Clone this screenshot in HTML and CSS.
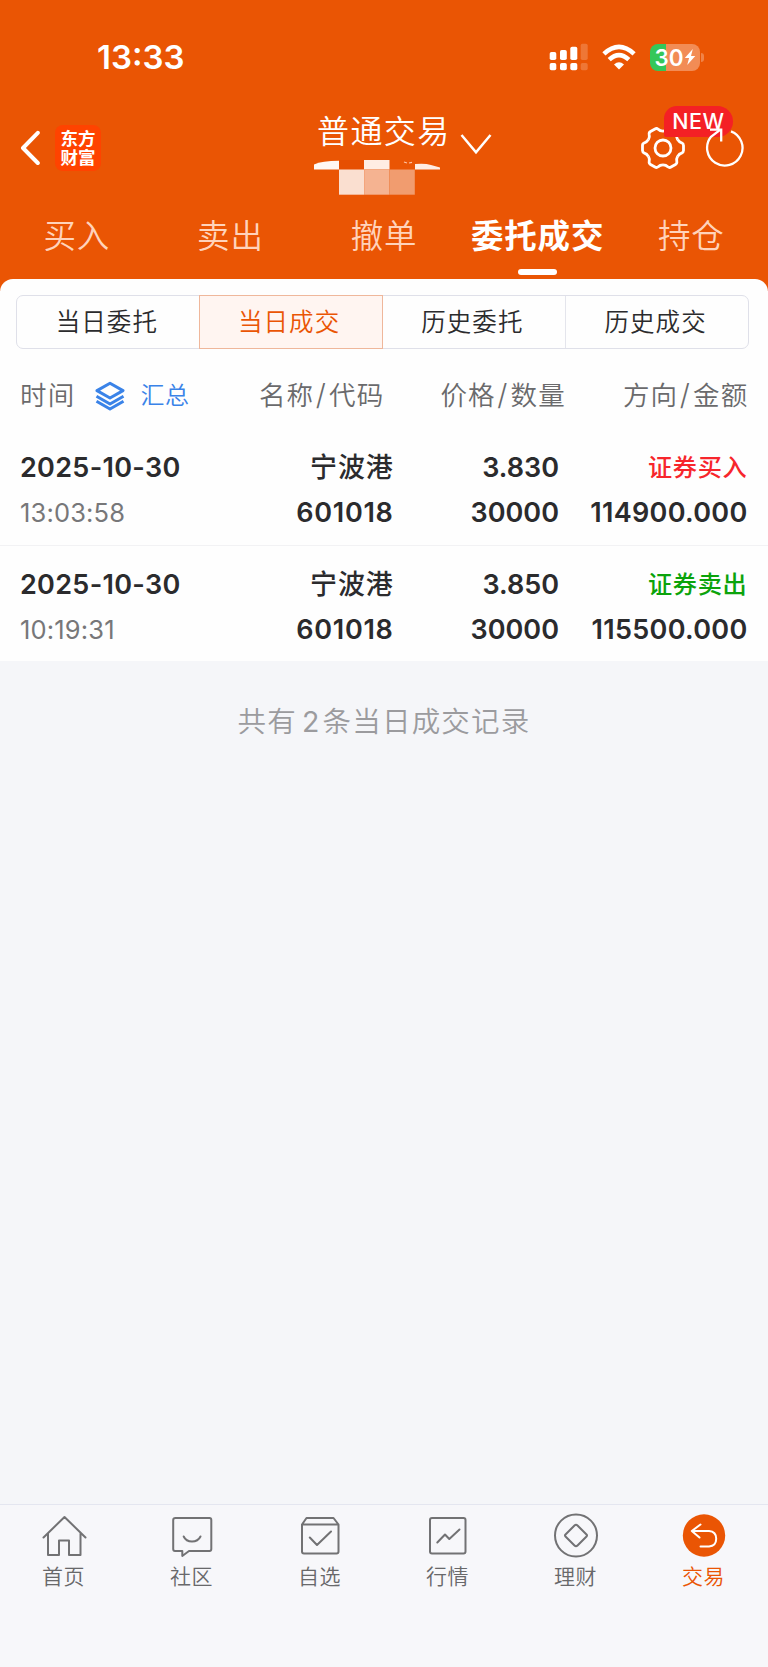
FILE: index.html
```html
<!DOCTYPE html>
<html lang="zh-CN">
<head>
<meta charset="utf-8">
<title>当日成交</title>
<link rel="stylesheet" href="styles.css">
</head>
<body>
<div class="app">
  <header class="top">
    <div class="status">
      <span class="clock">13:33</span>
      <div class="status-icons">
        <svg class="signal" width="39" height="28" viewBox="0 0 39 28" fill="#fff">
          <rect x=".7" y="9" width="6.6" height="8" rx="1.8"/><rect x="11" y="7" width="6.8" height="10" rx="1.8"/><rect x="21.3" y="3.7" width="7" height="13.3" rx="1.8"/>
          <rect x=".7" y="20" width="6.6" height="7.3" rx="1.8"/><rect x="11" y="20" width="6.8" height="7.3" rx="1.8"/><rect x="21.3" y="20" width="7" height="7.3" rx="1.8"/>
          <g opacity=".2"><rect x="31.7" y=".7" width="7" height="16.3" rx="1.8"/><rect x="31.7" y="20" width="7" height="7.3" rx="1.8"/></g>
        </svg>
        <svg class="wifi" width="34" height="27" viewBox="0 0 34 27" fill="none" stroke="#fff" stroke-width="4.6">
          <path d="M1.9 9.9Q17-4 32.1 9.9"/><path d="M7.2 15.6Q17 6.6 26.8 15.6"/><path d="M17 25.4l-5-5q5-4.4 10 0z" fill="#fff" stroke="none"/>
        </svg>
        <div class="battery"><span class="level">30</span>
          <svg width="12" height="18" viewBox="0 0 12 18" fill="#fff"><path d="M8.8 1L.8 10h4.3L3.200 17 11.300 7.900H7z"/></svg>
        </div>
        <i class="nub"></i>
      </div>
    </div>

    <div class="bar">
      <div class="bar-left">
        <svg width="22" height="36" viewBox="0 0 22 36" fill="none" stroke="#fff" stroke-width="4" stroke-linecap="round" stroke-linejoin="round"><path d="M18.800 2.800L4 18l14.800 15"/></svg>
        <div class="logo"><span>东方</span><span>财富</span></div>
      </div>
      <div class="account">
        <div class="account-name"><span>普通交易</span>
          <svg width="32" height="22" viewBox="0 0 32 22" fill="none" stroke="#fff" stroke-width="2.5"><path d="M1.500 2l14.500 17.200L30.500 2"/></svg>
        </div>
        <svg class="mosaic" width="126" height="36" viewBox="0 0 126 36">
          <path d="M0 9.500V4.500Q8 .8 25 .8V9.500z" fill="#fff8f4"/><path d="M50 0h25.500v9.500H50z" fill="#ffede3"/><path d="M25 0h25v9.500H25z" fill="#e64f02"/>
          <path d="M101 9.500V4q10-1 16 1l9 2.500v2z" fill="#ffede3"/><path d="M90 2l3 1M95 3l3-.6" stroke="#ffc5a5" stroke-width="1.200"/>
          <path d="M25 9.500h25.200v25.200H25z" fill="#fadfd0"/><path d="M50.200 9.500h25.200v25.200H50.200z" fill="#f5b391"/><path d="M75.400 9.500h25.400v25.200H75.400z" fill="#f19c6f"/>
        </svg>
      </div>
      <div class="tools">
        <svg class="gear" width="46" height="46" viewBox="-23 -23 46 46" fill="none" stroke="#fff" stroke-width="2.800">
          <defs><path id="tooth" d="M14.600-8.400Q16.200-5.800 18.600-5.200Q20.500-4.500 20.500-2.600V2.600Q20.500 4.500 18.600 5.200Q16.200 5.800 14.600 8.400"/></defs>
          <use href="#tooth"/><use href="#tooth" transform="rotate(60)"/><use href="#tooth" transform="rotate(120)"/><use href="#tooth" transform="rotate(180)"/><use href="#tooth" transform="rotate(240)"/><use href="#tooth" transform="rotate(300)"/>
          <circle r="8"/>
        </svg>
        <span class="badge">NEW</span>
        <svg class="refresh" width="40" height="42" viewBox="0 0 40 42" fill="none" stroke="#fff" stroke-width="2.300">
          <path d="M26 5.300A17.700 17.700 0 1 1 6 10.800L15.400 3.600"/><path d="M5 3.600h11.200v12"/>
        </svg>
      </div>
    </div>

    <nav class="tabs">
      <span>买入</span><span>卖出</span><span>撤单</span><span class="on">委托成交</span><span>持仓</span>
    </nav>
  </header>

  <main class="panel">
    <div class="segments">
      <span>当日委托</span><span class="on">当日成交</span><span>历史委托</span><span>历史成交</span>
    </div>
    <div class="grid head">
      <div class="c1">时间
        <svg width="30" height="30" viewBox="0 0 30 30" fill="none" stroke="#3a83e8" stroke-width="3" stroke-linejoin="round"><path d="M15 2.200L28 9.600 15 17 2 9.600z"/><path d="M1.500 15.200L15 23l13.500-7.800M1.500 20.200L15 28l13.500-7.800"/></svg>
        <b>汇总</b>
      </div>
      <span class="c2">名称<i>/</i>代码</span><span class="c3">价格<i>/</i>数量</span><span class="c4">方向<i>/</i>金额</span>
    </div>
    <div class="trade">
      <div class="grid"><span class="c1">2025-10-30</span><span class="c2 name">宁波港</span><span class="c3">3.830</span><span class="c4 side buy">证券买入</span></div>
      <div class="grid"><span class="c1 time">13:03:58</span><span class="c2 code">601018</span><span class="c3">30000</span><span class="c4">114900.000</span></div>
    </div>
    <div class="trade">
      <div class="grid"><span class="c1">2025-10-30</span><span class="c2 name">宁波港</span><span class="c3">3.850</span><span class="c4 side sell">证券卖出</span></div>
      <div class="grid"><span class="c1 time">10:19:31</span><span class="c2 code">601018</span><span class="c3">30000</span><span class="c4">115500.000</span></div>
    </div>
  </main>

  <p class="summary">共有<span>2</span>条当日成交记录</p>

  <nav class="dock">
    <div class="item"><svg width="46" height="46" viewBox="0 0 46 46"><path d="M2.500 24.500L23.500 4 44.500 24.500M7 20.500V42H18V27.500H28V42H39.500V20.500"/></svg><span>首页</span></div>
    <div class="item"><svg width="46" height="46" viewBox="0 0 46 46"><path d="M6.500 5H40.500Q42.300 5 42.300 7V36Q42.300 38 40.500 38H20L13.300 43V38H6Q4.200 38 4.200 36V7Q4.200 5 6.500 5z"/><path d="M14.700 23.500Q17 28.500 23 28.500T31.500 23.500"/></svg><span>社区</span></div>
    <div class="item"><svg width="46" height="46" viewBox="0 0 46 46"><path d="M9.500 5H36.500L41.500 11.500V38.500Q41.500 40.500 39.500 40.500H7Q5 40.500 5 38.500V11.500zM5 11.500H41.500M12.800 24.500L20 32 34 18.500"/></svg><span>自选</span></div>
    <div class="item"><svg width="46" height="46" viewBox="0 0 46 46"><rect x="5" y="5" width="35.500" height="35.500" rx="2"/><path d="M12.300 29.500L20 21.500 24.300 26 34.500 16.500"/></svg><span>行情</span></div>
    <div class="item"><svg width="46" height="46" viewBox="0 0 46 46"><circle cx="23" cy="22.500" r="21"/><path d="M21.500 12.500Q23 11 24.500 12.500L33.500 21.500Q34.500 22.500 33.500 23.500L24.500 32.500Q23 34 21.500 32.500L12.500 23.500Q11.500 22.500 12.500 21.500z"/></svg><span>理财</span></div>
    <div class="item on"><svg width="46" height="46" viewBox="0 0 46 46"><circle class="disc" cx="23" cy="22.500" r="21.200"/><path class="arrow" d="M19.500 11.500L10.800 18 18.500 24.500M10.800 18H28Q35.200 18.500 35.200 25.700T28 33.400H19.500"/></svg><span>交易</span></div>
  </nav>
</div>
</body>
</html>
```
FILE: styles.css
```css
* { box-sizing: border-box; }
body {
  margin: 0;
  background: #f5f6f9;
  font-family: Inter, "Noto Sans CJK SC", sans-serif;
  color: #2b2b2d;
}
svg { display: block; flex: none; }
.app { width: 768px; height: 1667px; display: flex; flex-direction: column; }

.top { height: 291px; background: #ea5504; color: #fff; flex: none; }
.status { height: 100px; padding: 14px 64px 0 97px; display: flex; align-items: center; justify-content: space-between; }
.clock { font-size: 33px; font-weight: 600; line-height: 40px; }
.status-icons { display: flex; align-items: center; }
.wifi { margin: 0 14px 0 14px; }
.battery {
  width: 50px; height: 27px; border-radius: 8px;
  display: flex; align-items: center; justify-content: center;
  background: linear-gradient(90deg, #34c759 32%, #f28c55 32%);
}
.level { font-size: 22.500px; font-weight: 600; line-height: 27px; }
.nub { width: 3px; height: 9px; margin-left: 1px; border-radius: 0 3px 3px 0; background: #f08348; }

.bar { height: 104px; display: grid; grid-template-columns: 314px 200px 1fr; }
.bar-left { display: flex; padding: 24px 0 0 19px; gap: 14px; height: 72px; align-items: center; }
.logo {
  width: 46px; height: 46px; border-radius: 8px; background: #ff4300;
  display: flex; flex-direction: column; align-items: center; justify-content: center;
  font-size: 17.500px; font-weight: 700; line-height: 19.500px;
}
.account-name { height: 59.500px; padding: 5px 0 0 3px; display: flex; align-items: center; font-size: 32px; letter-spacing: 1.400px; line-height: 44px; font-weight: 350; white-space: nowrap; }
.account-name svg { margin: 23px 0 0 9.500px; }
.tools { position: relative; }
.gear { position: absolute; left: 126px; top: 24.500px; }
.badge {
  position: absolute; left: 150px; top: 5.500px; width: 69px; height: 31.500px;
  border-radius: 13px 16px 16px 2px; background: #f42025;
  font-size: 21.500px; font-weight: 500; line-height: 31px; text-align: center; letter-spacing: .5px;
}
.refresh { position: absolute; left: 191px; top: 26px; }

.tabs { display: grid; grid-template-columns: repeat(5, 1fr); height: 75px; }
.tabs span { position: relative; text-align: center; font-size: 32.500px; line-height: 65px; letter-spacing: .8px; font-weight: 350; color: #ffd3bb; }
.tabs .on { font-weight: 700; color: #fff; }
.tabs .on::after { content: ""; position: absolute; left: 57px; top: 64.500px; width: 39px; height: 6.500px; border-radius: 3px; background: #fff; }

.panel { position: relative; margin-top: -12px; height: 382px; border-radius: 13px 13px 0 0; background: #fefefe; flex: none; padding-top: 16px; }
.segments { margin: 0 19px 0 16px; height: 54px; display: grid; grid-template-columns: repeat(4, 1fr); grid-template-rows: 52px; border: 1px solid #dfe0e9; border-radius: 7px; }
.segments span { text-align: center; font-size: 24.500px; line-height: 53px; letter-spacing: 1.100px; border-left: 1px solid #e4e5ec; padding-right: 3px; font-weight: 350; }
.segments span:first-child { border-left: 0; }
.segments .on { margin: -1px 0 -1px -1px; border: 1px solid #efb79b; background: #fff5f1; color: #ea5504; }
.segments .on + span { border-left: 0; }

.grid { display: grid; grid-template-columns: 203px 170.500px 165.500px 188.500px; align-items: center; padding-left: 20px; white-space: nowrap; }
.c2, .c3, .c4 { justify-self: end; }
.head { height: 79.500px; padding-top: 9px; font-size: 26.500px; letter-spacing: 1.200px; font-weight: 350; color: #6a6a6c; }
.head i { font-style: normal; font-size: 29px; line-height: 30px; margin: 0 2px 0 1.500px; }
.head .c1 { display: flex; align-items: center; }
.head svg { margin: 5px 15px 0 20px; }
.head b { font-size: 24px; letter-spacing: .6px; font-weight: 350; color: #3a83e8; }
.head .c2 { margin-right: 9px; }
.head .c3 { margin-right: -7px; }
.head .c4 { margin-right: -1px; }
.trade { height: 117px; padding-top: 16px; border-bottom: 1.500px solid #f2f2f4; }
.trade:last-child { border: 0; }
.trade .grid { height: 45px; font-size: 27px; font-weight: 600; letter-spacing: .3px; }
.trade .c3 { letter-spacing: 0; }
.trade .code { letter-spacing: .7px; }
.trade .time { font-size: 25.500px; font-weight: 400; letter-spacing: .15px; color: #777779; }
.trade .name { font-size: 27px; font-weight: 500; letter-spacing: .8px; margin-top: -3px; }
.trade .side { font-size: 24.200px; font-weight: 500; letter-spacing: .7px; margin-top: -3px; }
.trade .buy { color: #f7262c; }
.trade .sell { color: #0ba30b; }

.summary { margin: 0; height: 843px; padding: 40px 0 0; text-align: center; font-size: 28.500px; line-height: 42px; letter-spacing: 1.200px; color: #9b9b9e; font-weight: 350; }
.summary span { font-weight: 400; margin: 0 2px 0 5px; }

.dock { height: 163px; border-top: 1.500px solid #e4e6f0; background: #f7f7fa; display: grid; grid-template-columns: repeat(6, 1fr); padding-top: 8px; }
.item { display: flex; flex-direction: column; align-items: center; font-size: 21px; line-height: 30px; letter-spacing: .4px; color: #68686a; gap: 3px; font-weight: 350; }
.item span { margin-right: 1px; }
.item svg { fill: none; stroke: #727274; stroke-width: 2; stroke-linejoin: round; stroke-linecap: round; }
.item.on { color: #ea5504; }
.item .disc { fill: #ea5504; stroke: none; }
.item .arrow { stroke: #fff; stroke-width: 2; }
```
